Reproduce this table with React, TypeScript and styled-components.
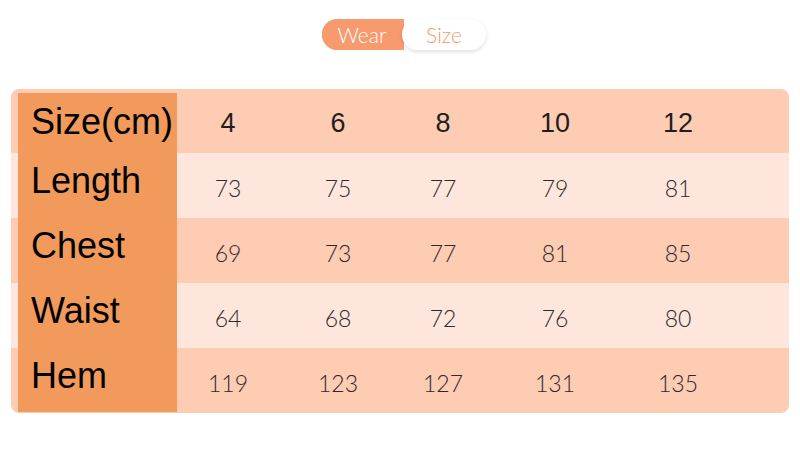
import React from 'react';
import styled, { createGlobalStyle } from 'styled-components';

const GlobalStyle = createGlobalStyle`
  html, body {
    margin: 0;
    padding: 0;
    background: #ffffff;
  }
  body {
    font-family: 'Liberation Sans', Arial, sans-serif;
  }
`;

const Page = styled.div`
  width: 800px;
  height: 472px;
  overflow: hidden;
`;

const ToggleBar = styled.div`
  display: flex;
  justify-content: center;
  padding: 19px 0 0 8px;
  margin-bottom: 39px;
`;

const Toggle = styled.div`
  display: flex;
  height: 31px;
  border-radius: 16px;
  background: linear-gradient(to right, #f79a6d 50%, #ffffff 50%);
`;

const Segment = styled.div<{ $active?: boolean }>`
  display: flex;
  align-items: center;
  justify-content: center;
  width: ${({ $active }) => ($active ? '80px' : '84px')};
  border-radius: 16px;
  font-family: Lato, 'Open Sans', sans-serif;
  font-weight: 300;
  font-size: 21px;
  color: ${({ $active }) => ($active ? '#ffffff' : '#f29a70')};
  background: ${({ $active }) => ($active ? '#f79a6d' : '#ffffff')};
  box-shadow: ${({ $active }) => ($active ? 'none' : '0 2px 4px rgba(0, 0, 0, 0.12)')};
`;

const Table = styled.div`
  margin: 0 11px;
  width: 778px;
  border-radius: 8px;
  overflow: hidden;
`;

const Row = styled.div<{ $light?: boolean; $height: number }>`
  display: flex;
  height: ${({ $height }) => $height}px;
  padding-left: 7px;
  background: ${({ $light }) => ($light ? '#fee6dc' : '#fecbb3')};
`;

const LabelCell = styled.div<{ $first?: boolean; $last?: boolean }>`
  width: 159px;
  flex-shrink: 0;
  margin-top: ${({ $first }) => ($first ? '4px' : '0')};
  margin-bottom: ${({ $last }) => ($last ? '1px' : '0')};
  background: #f19a5b;
  display: flex;
  align-items: center;
  padding: 0 0 ${({ $first }) => ($first ? '3px' : '9px')} 13px;
  box-sizing: border-box;
  font-size: 36px;
  color: #000000;
`;

const ValueCell = styled.div<{ $width: number; $head?: boolean }>`
  width: ${({ $width }) => $width}px;
  display: flex;
  align-items: center;
  justify-content: center;
  padding-top: ${({ $head }) => ($head ? '4px' : '5px')};
  box-sizing: border-box;
  font-family: ${({ $head }) => ($head ? "'Liberation Sans', Arial, sans-serif" : 'Lato, sans-serif')};
  font-weight: ${({ $head }) => ($head ? 400 : 300)};
  font-size: ${({ $head }) => ($head ? '27px' : '23px')};
  color: ${({ $head }) => ($head ? '#1e1e1e' : '#2a2a2a')};
`;

const widths = [102, 118, 92, 132, 114];

const rows = [
  { label: 'Size(cm)', values: ['4', '6', '8', '10', '12'] },
  { label: 'Length', values: ['73', '75', '77', '79', '81'] },
  { label: 'Chest', values: ['69', '73', '77', '81', '85'] },
  { label: 'Waist', values: ['64', '68', '72', '76', '80'] },
  { label: 'Hem', values: ['119', '123', '127', '131', '135'] },
];

export default function App() {
  return (
    <Page>
      <GlobalStyle />
      <ToggleBar>
        <Toggle>
          <Segment $active>Wear</Segment>
          <Segment>Size</Segment>
        </Toggle>
      </ToggleBar>

      <Table>
        {rows.map((row, i) => (
          <Row key={row.label} $light={i % 2 === 1} $height={i === 0 ? 64 : 65}>
            <LabelCell $first={i === 0} $last={i === rows.length - 1}>
              {row.label}
            </LabelCell>
            {row.values.map((v, j) => (
              <ValueCell key={j} $width={widths[j]} $head={i === 0}>
                {v}
              </ValueCell>
            ))}
          </Row>
        ))}
      </Table>
    </Page>
  );
}
